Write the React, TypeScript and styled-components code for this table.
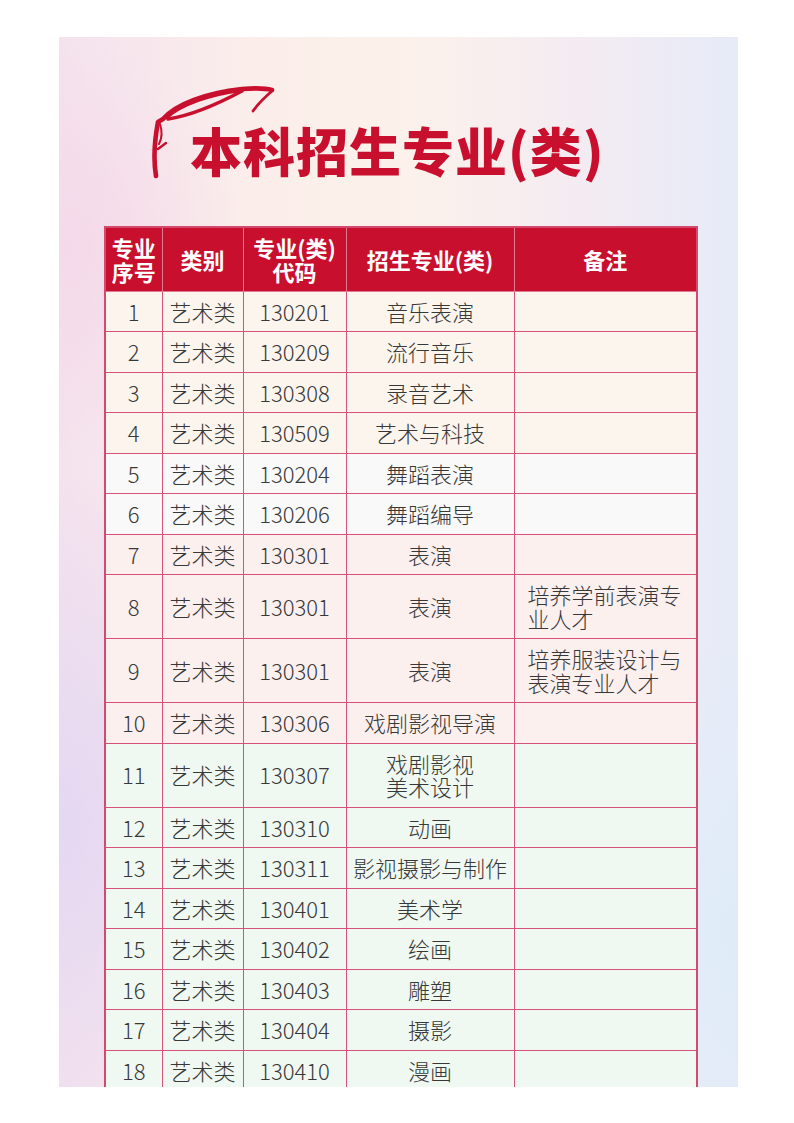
import styled, { createGlobalStyle } from "styled-components";

const GlobalStyle = createGlobalStyle`
  html, body {
    margin: 0;
    padding: 0;
    background: #ffffff;
  }
  body {
    font-family: "Noto Sans CJK SC", "Noto Sans", sans-serif;
  }
`;

const Page = styled.div`
  width: 794px;
  height: 1123px;
  padding: 37px 56px 0 59px;
  box-sizing: border-box;
`;

const Poster = styled.div`
  width: 679px;
  height: 1050px;
  overflow: hidden;
  box-sizing: border-box;
  padding: 87px 42px 0 45px;
  background:
    radial-gradient(ellipse 300px 500px at 0% 75%, rgba(226, 214, 242, 0.9), rgba(226, 214, 242, 0) 70%),
    radial-gradient(ellipse 260px 420px at 100% 85%, rgba(222, 236, 248, 0.95), rgba(222, 236, 248, 0) 70%),
    radial-gradient(ellipse 260px 300px at 0% 20%, rgba(244, 214, 232, 0.8), rgba(244, 214, 232, 0) 70%),
    linear-gradient(90deg, #f4e2ee 0%, #fbeeea 30%, #fcf1ea 50%, #f3ebf2 78%, #e6ebf8 100%);
`;

const TitleWrap = styled.div`
  position: relative;
  padding-left: 86px;
  height: 52px;
  margin-bottom: 50px;
`;

const Swoosh = styled.svg`
  position: absolute;
  left: 46px;
  top: -42px;
  width: 130px;
  height: 100px;
`;

const Title = styled.h1`
  margin: 0;
  font-family: "Noto Sans CJK SC", sans-serif;
  font-weight: 900;
  font-size: 52px;
  line-height: 52px;
  color: #c8102e;
  letter-spacing: 1px;
  white-space: nowrap;
`;

const Table = styled.table`
  width: 592px;
  table-layout: fixed;
  border-collapse: collapse;
  border: 2px solid #d44a6e;
`;

const HeadCell = styled.th`
  background: #c8102e;
  color: #ffffff;
  font-weight: 700;
  font-size: 22px;
  line-height: 24px;
  height: 64px;
  padding: 0 1px;
  box-sizing: border-box;
  border: 1px solid #e07a92;
  border-top: none;
  text-align: center;
  vertical-align: middle;
`;

const Row = styled.tr<{ $tint: string }>`
  background: ${(p) => p.$tint};
`;

const Cell = styled.td<{ $note?: boolean }>`
  border: 1px solid #d65278;
  padding: ${(p) => (p.$note ? "8px 4px 8px 13px" : "8px 2px")};
  font-size: 22px;
  line-height: 23.5px;
  color: #383838;
  font-weight: 300;
  text-align: ${(p) => (p.$note ? "left" : "center")};
  vertical-align: middle;
`;

const tints = {
  cream: "#fbf5ed",
  white: "#f9f9f9",
  pink: "#fcf0ef",
  green: "#eff8f1",
};

type Item = {
  no: number;
  code: string;
  name: React.ReactNode;
  note?: string;
  tint: string;
};

const items: Item[] = [
  { no: 1, code: "130201", name: "音乐表演", tint: tints.cream },
  { no: 2, code: "130209", name: "流行音乐", tint: tints.cream },
  { no: 3, code: "130308", name: "录音艺术", tint: tints.cream },
  { no: 4, code: "130509", name: "艺术与科技", tint: tints.cream },
  { no: 5, code: "130204", name: "舞蹈表演", tint: tints.white },
  { no: 6, code: "130206", name: "舞蹈编导", tint: tints.white },
  { no: 7, code: "130301", name: "表演", tint: tints.pink },
  { no: 8, code: "130301", name: "表演", note: "培养学前表演专业人才", tint: tints.pink },
  { no: 9, code: "130301", name: "表演", note: "培养服装设计与表演专业人才", tint: tints.pink },
  { no: 10, code: "130306", name: "戏剧影视导演", tint: tints.pink },
  {
    no: 11,
    code: "130307",
    name: (
      <>
        戏剧影视
        <br />
        美术设计
      </>
    ),
    tint: tints.green,
  },
  { no: 12, code: "130310", name: "动画", tint: tints.green },
  { no: 13, code: "130311", name: "影视摄影与制作", tint: tints.green },
  { no: 14, code: "130401", name: "美术学", tint: tints.green },
  { no: 15, code: "130402", name: "绘画", tint: tints.green },
  { no: 16, code: "130403", name: "雕塑", tint: tints.green },
  { no: 17, code: "130404", name: "摄影", tint: tints.green },
  { no: 18, code: "130410", name: "漫画", tint: tints.green },
];

function Logo() {
  return (
    <Swoosh viewBox="0 0 130 100" fill="none" stroke="#c8102e" strokeLinecap="round" strokeLinejoin="round">
      <path d="M6 94 C3 76 5 56 8 40 L13 37 C26 22 56 11 92 7 C105 6 115 6 122 8" strokeWidth="4.6" />
      <path d="M17 36 C32 23 60 13 92 9" strokeWidth="2" />
      <path d="M18 37 C38 34 64 24 92 9" strokeWidth="3.6" />
      <path d="M122 9 C115 15 108 22 103 29" strokeWidth="2.8" />
      <path d="M8 67 L16 61" strokeWidth="2.4" />
      <path d="M10 42 C12 48 13 54 9 62" strokeWidth="2" />
    </Swoosh>
  );
}

export default function App() {
  return (
    <>
      <GlobalStyle />
      <Page>
        <Poster>
          <TitleWrap>
            <Logo />
            <Title>本科招生专业(类)</Title>
          </TitleWrap>
          <Table>
            <colgroup>
              <col style={{ width: 57 }} />
              <col style={{ width: 81 }} />
              <col style={{ width: 103 }} />
              <col style={{ width: 168 }} />
              <col style={{ width: 183 }} />
            </colgroup>
            <thead>
              <tr>
                <HeadCell>
                  专业
                  <br />
                  序号
                </HeadCell>
                <HeadCell>类别</HeadCell>
                <HeadCell>
                  专业(类)
                  <br />
                  代码
                </HeadCell>
                <HeadCell>招生专业(类)</HeadCell>
                <HeadCell>备注</HeadCell>
              </tr>
            </thead>
            <tbody>
              {items.map((it) => (
                <Row key={it.no} $tint={it.tint}>
                  <Cell>{it.no}</Cell>
                  <Cell>艺术类</Cell>
                  <Cell>{it.code}</Cell>
                  <Cell>{it.name}</Cell>
                  <Cell $note>{it.note}</Cell>
                </Row>
              ))}
            </tbody>
          </Table>
        </Poster>
      </Page>
    </>
  );
}
